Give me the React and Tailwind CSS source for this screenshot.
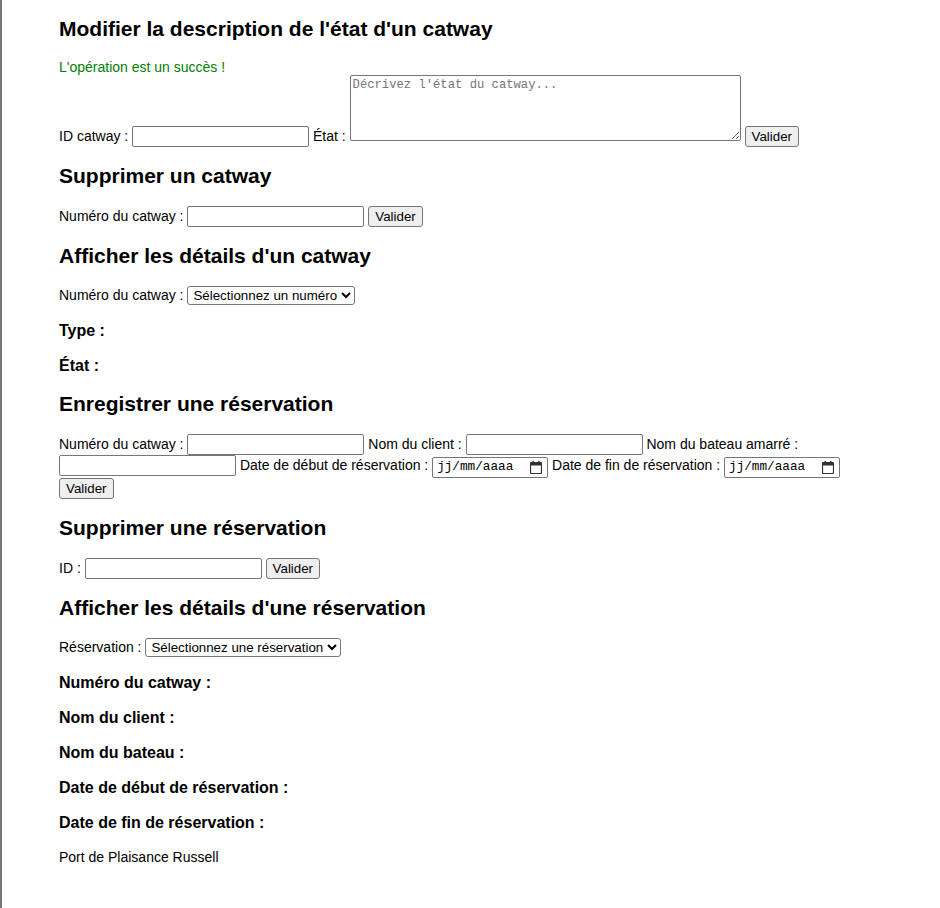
import { useState } from "react";

const inputCls =
  "align-baseline bg-white border border-[#767676] rounded-[2px] h-[21px] px-[2px] text-[13.33px] outline-none";
const btnCls =
  "align-baseline bg-[#efefef] border border-[#767676] rounded-[3px] h-[21px] px-[6px] text-[13.33px] text-black leading-none";
const selectCls =
  "align-baseline bg-white border border-[#767676] rounded-[3px] h-[19px] text-[13.33px] text-black pl-[1px]";

function Title({ children, first }) {
  return (
    <h2 className={`text-[21px] font-bold leading-[24px] mb-[18px] ${first ? "mt-0" : "mt-[17px]"}`}>
      {children}
    </h2>
  );
}

function Detail({ children }) {
  return <p className="text-[16px] font-bold leading-[18px] my-[17px]">{children}</p>;
}

function DateField() {
  return (
    <span className="inline-flex items-center align-baseline bg-white border border-[#767676] rounded-[2px] h-[21px] w-[116px] pl-[4px] pr-[5px] justify-between">
      <span className="font-['Liberation_Mono',monospace] text-[12.7px] leading-none">jj/mm/aaaa</span>
      <svg width="12" height="13" viewBox="0 0 12 13" className="text-[#333]">
        <rect x="0.5" y="1.5" width="11" height="11" rx="1" fill="none" stroke="currentColor" strokeWidth="1.2" />
        <rect x="0.5" y="1.5" width="11" height="3" fill="currentColor" />
        <rect x="2.5" y="0" width="1.5" height="2.5" fill="currentColor" />
        <rect x="8" y="0" width="1.5" height="2.5" fill="currentColor" />
      </svg>
    </span>
  );
}

export default function App() {
  const [etat, setEtat] = useState("");

  return (
    <div className="min-h-screen border-l-2 border-[#767676] bg-white text-black font-['Liberation_Sans',Arial,sans-serif] text-[14px] leading-[16px]">
      <div className="pl-[57px] pr-[57px] pt-[17px] pb-[40px]">
        <Title first>Modifier la description de l'état d'un catway</Title>
        <p className="text-[#008000] mt-[18px] mb-0">L'opération est un succès !</p>
        <form className="leading-[18px]">
          ID catway :{" "}
          <input type="text" className={`${inputCls} w-[177px]`} />{" "}
          État :{" "}
          <textarea
            value={etat}
            onChange={(e) => setEtat(e.target.value)}
            placeholder="Décrivez l'état du catway..."
            className="align-baseline resize bg-white border border-[#767676] rounded-[2px] w-[391px] h-[66px] p-[2px] font-['Liberation_Mono',monospace] text-[12.2px] leading-[15px] placeholder:text-[#757575] outline-none"
          />{" "}
          <button type="button" className={btnCls}>Valider</button>
        </form>

        <Title>Supprimer un catway</Title>
        <form className="leading-[18px]">
          Numéro du catway :{" "}
          <input type="text" className={`${inputCls} w-[177px]`} />{" "}
          <button type="button" className={btnCls}>Valider</button>
        </form>

        <Title>Afficher les détails d'un catway</Title>
        <div className="leading-[18px]">
          Numéro du catway :{" "}
          <select className={`${selectCls} w-[168px]`}>
            <option>Sélectionnez un numéro</option>
          </select>
        </div>
        <Detail>Type :</Detail>
        <Detail>État :</Detail>

        <Title>Enregistrer une réservation</Title>
        <form className="leading-[18px]">
          Numéro du catway :{" "}
          <input type="text" className={`${inputCls} w-[177px]`} />{" "}
          Nom du client :{" "}
          <input type="text" className={`${inputCls} w-[177px]`} />{" "}
          Nom du bateau amarré :{" "}
          <input type="text" className={`${inputCls} w-[177px]`} />{" "}
          Date de début de réservation : <DateField />{" "}
          Date de fin de réservation : <DateField />{" "}
          <button type="button" className={btnCls}>Valider</button>
        </form>

        <Title>Supprimer une réservation</Title>
        <form className="leading-[18px]">
          ID :{" "}
          <input type="text" className={`${inputCls} w-[177px]`} />{" "}
          <button type="button" className={btnCls}>Valider</button>
        </form>

        <Title>Afficher les détails d'une réservation</Title>
        <div className="leading-[18px]">
          Réservation :{" "}
          <select className={`${selectCls} w-[196px]`}>
            <option>Sélectionnez une réservation</option>
          </select>
        </div>
        <Detail>Numéro du catway :</Detail>
        <Detail>Nom du client :</Detail>
        <Detail>Nom du bateau :</Detail>
        <Detail>Date de début de réservation :</Detail>
        <Detail>Date de fin de réservation :</Detail>

        <footer className="mt-[17px]">
          <p>Port de Plaisance Russell</p>
        </footer>
      </div>
    </div>
  );
}
